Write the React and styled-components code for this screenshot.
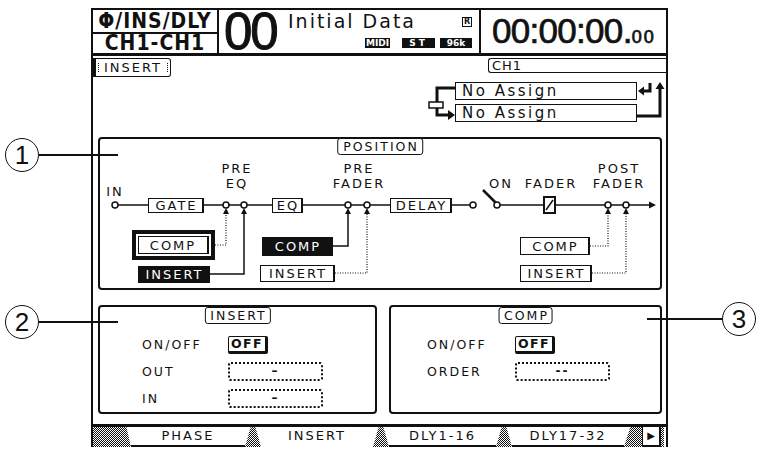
import React from 'react';
import styled, { createGlobalStyle, css } from 'styled-components';

// Shared values
const INK = '#111';
const LCD = `"DejaVu Sans", "Liberation Sans", sans-serif`;
const HATCH = `repeating-conic-gradient(${INK} 0 25%, #fff 0 50%) 0 0 / 2px 2px`;

const GlobalStyle = createGlobalStyle`
  html, body { margin: 0; padding: 0; background: #fff; }
  #root { width: 759px; height: 451px; }
`;

// Page & screen
const Page = styled.div`
  position: relative;
  width: 759px;
  height: 451px;
  overflow: hidden;
  box-sizing: border-box;
  padding: 8px 0 0 91px;
  font-family: ${LCD};
  color: ${INK};
`;

const Screen = styled.div`
  width: 577px;
  height: 439px;
  box-sizing: border-box;
  border: 2px solid ${INK};
  border-bottom: 0;
  display: flex;
  flex-direction: column;
`;

// Header
const Header = styled.header`
  display: flex;
  height: 46px;
  box-sizing: border-box;
  border-bottom: 3px solid ${INK};
`;

const ChannelCell = styled.div`
  width: 124px;
  border-right: 2px solid ${INK};
  display: flex;
  flex-direction: column;
`;

const ChannelRow = styled.div`
  height: ${p => p.$h}px;
  display: flex;
  align-items: center;
  justify-content: center;
  font-family: "DejaVu Sans Condensed", "Liberation Sans Narrow", "Liberation Sans", sans-serif;
  font-weight: bold;
  font-size: 21px;
  letter-spacing: 1px;
  line-height: 1;
  & + & { border-top: 2px solid ${INK}; }
`;

const SceneCell = styled.div`
  width: 260px;
  border-right: 2px solid ${INK};
  display: flex;
`;

const SceneNumber = styled.div`
  width: 66px;
  margin-top: -4px;
  padding-left: 5px;
  box-sizing: border-box;
  font-family: "Liberation Sans", sans-serif;
  font-size: 51px;
  line-height: 1;
  letter-spacing: -2px;
  -webkit-text-stroke: 1px ${INK};
`;

const SceneInfo = styled.div`
  flex: 1;
  display: flex;
  flex-direction: column;
  padding: 0 7px 0 3px;
`;

const SceneTitleRow = styled.div`
  display: flex;
  align-items: flex-start;
  justify-content: space-between;
  height: 28px;
`;

const SceneTitle = styled.span`
  font-family: "DejaVu Sans", sans-serif;
  font-size: 19px;
  letter-spacing: 2px;
  line-height: 23px;
`;

const ProtectMark = styled.span`
  margin-top: 7px;
  width: 10px;
  height: 10px;
  box-sizing: border-box;
  border: 1.5px solid ${INK};
  font-size: 8px;
  font-weight: bold;
  line-height: 7px;
  text-align: center;
`;

const BadgeRow = styled.div`
  display: flex;
  justify-content: flex-end;
`;

const Badge = styled.span`
  background: ${INK};
  color: #fff;
  height: 10px;
  width: ${p => p.$w}px;
  margin-left: ${p => p.$gap}px;
  font-size: 9px;
  font-weight: bold;
  line-height: 10px;
  text-align: center;
  letter-spacing: ${p => p.$ls || 0}px;
`;

const ClockCell = styled.div`
  flex: 1;
  display: flex;
  align-items: baseline;
  padding: 3px 0 0 11px;
  font-family: "Liberation Sans", sans-serif;
  -webkit-text-stroke: 0.7px ${INK};
`;

const ClockMain = styled.span`
  font-size: 35px;
  line-height: 1;
  letter-spacing: -0.7px;
`;

const ClockFrames = styled.span`
  font-size: 18px;
  letter-spacing: 2px;
`;

// Body
const Body = styled.main`
  flex: 1;
  display: flex;
  flex-direction: column;
`;

const TopArea = styled.div`
  height: 81px;
  display: flex;
  justify-content: space-between;
  padding-top: 2px;
  box-sizing: border-box;
`;

const PageLabel = styled.div`
  position: relative;
  height: 17px;
  padding: 0 8px;
  border: 1.5px solid ${INK};
  border-left-width: 3px;
  border-radius: 0 3px 3px 0;
  font-size: 13px;
  letter-spacing: 2px;
  line-height: 17px;
  &::before, &::after {
    content: '';
    position: absolute;
    top: 4px;
    height: 9px;
    border-left: 1.5px dotted ${INK};
  }
  &::before { left: 2px; }
  &::after { right: 2px; }
`;

const RoutingColumn = styled.div`
  display: flex;
  flex-direction: column;
  align-items: flex-end;
`;

const ChannelName = styled.div`
  width: 178px;
  height: 15px;
  box-sizing: border-box;
  border: 1.5px solid ${INK};
  border-right: 0;
  border-radius: 3px 0 0 3px;
  padding-left: 3px;
  font-size: 13px;
  letter-spacing: 1px;
  line-height: 13px;
`;

const AssignGrid = styled.div`
  margin-top: 9px;
  display: grid;
  grid-template-columns: 28px 182px 29px;
  grid-template-rows: 18px 18px;
  row-gap: 4px;
`;

const AssignBox = styled.div`
  grid-column: 2;
  border: 1.5px solid ${INK};
  box-sizing: border-box;
  padding-left: 6px;
  font-size: 15px;
  letter-spacing: 2.5px;
  line-height: 16px;
`;

const AssignIcon = styled.svg`
  grid-row: 1 / 3;
  grid-column: ${p => p.$col};
`;

// Position diagram
const PositionFrame = styled.section`
  position: relative;
  height: 153px;
  margin: 0 4px 0 5px;
  box-sizing: border-box;
  border: 2px solid ${INK};
  border-radius: 4px;
`;

const FrameLabel = styled.div`
  position: absolute;
  top: -1px;
  left: 50%;
  transform: translateX(-50%);
  height: 15px;
  padding: 0 3px 0 5px;
  border: 1.5px solid ${INK};
  border-radius: 3px;
  font-size: 12.5px;
  letter-spacing: 2px;
  line-height: 15px;
  background: #fff;
`;

const Canvas = styled.div`
  position: absolute;
  inset: -2px;
`;

const Wires = styled.svg`
  position: absolute;
  left: 0;
  top: 0;
`;

const DiagramText = styled.div`
  position: absolute;
  left: ${p => p.$x}px;
  top: ${p => p.$y}px;
  transform: translateX(-50%);
  font-size: 13px;
  line-height: 15px;
  letter-spacing: 2px;
  text-align: center;
  white-space: nowrap;
`;

const Block = styled.div`
  position: absolute;
  left: ${p => p.$x}px;
  top: ${p => p.$y}px;
  width: ${p => p.$w}px;
  height: ${p => p.$h}px;
  box-sizing: border-box;
  display: flex;
  align-items: center;
  justify-content: center;
  font-size: 13px;
  letter-spacing: 2px;
  padding-left: 2px;
  background: #fff;
  border: 1.5px solid ${INK};
  border-right-width: 2.5px;
  ${p => p.$variant === 'filled' && css`
    background: ${INK};
    color: #fff;
  `}
  ${p => p.$variant === 'selected' && css`
    border: 4px solid ${INK};
    padding: 2px;
  `}
`;

const BlockInner = styled.span`
  flex: 1;
  align-self: stretch;
  display: flex;
  align-items: center;
  justify-content: center;
  border: 1.5px solid ${INK};
  border-right-width: 2.5px;
`;

// Parameter panels
const PanelRow = styled.div`
  display: flex;
  gap: 12px;
  height: 109px;
  margin: 15px 4px 0 5px;
`;

const Panel = styled.section`
  position: relative;
  flex: 1;
  box-sizing: border-box;
  border: 2px solid ${INK};
  border-radius: 4px;
  padding: 24px 0 0 ${p => p.$pad}px;
  display: grid;
  grid-template-columns: ${p => p.$labelW}px auto;
  grid-auto-rows: 27px;
  align-content: start;
  align-items: center;
`;

const PanelLabel = styled.div`
  position: absolute;
  top: 0;
  left: 50%;
  transform: translateX(-50%);
  height: 15px;
  padding: 0 3px 0 5px;
  border: 1.5px solid ${INK};
  border-radius: 3px;
  font-size: 12.5px;
  letter-spacing: 2px;
  line-height: 15px;
`;

const ParamName = styled.span`
  font-size: 12.5px;
  letter-spacing: 2px;
`;

const OffButton = styled.span`
  justify-self: start;
  width: 40px;
  height: 18px;
  box-sizing: border-box;
  border: 1.5px solid ${INK};
  border-right-width: 3px;
  border-bottom-width: 3px;
  border-radius: 2px;
  font-size: 12.5px;
  font-weight: bold;
  letter-spacing: 1.5px;
  text-align: center;
  line-height: 14px;
`;

const ValueField = styled.span`
  justify-self: start;
  width: 95px;
  height: 19px;
  box-sizing: border-box;
  border: 2px dotted ${INK};
  border-radius: 3px;
  font-size: 12px;
  font-weight: bold;
  text-align: center;
  line-height: 15px;
  letter-spacing: 2px;
`;

// Tabs
const TabBar = styled.nav`
  margin-top: auto;
  height: 23px;
  box-sizing: border-box;
  border-top: 3px solid ${INK};
  display: flex;
`;

const Hatch = styled.div`
  width: ${p => p.$w}px;
  background: ${HATCH};
  clip-path: ${p => p.$clip || 'none'};
`;

const Tab = styled.div`
  width: ${p => p.$w}px;
  box-sizing: border-box;
  border-bottom: ${p => (p.$active ? '0' : `2px solid ${INK}`)};
  font-size: 13px;
  letter-spacing: 2px;
  line-height: 18px;
  text-align: center;
`;

const ArrowTab = styled.div`
  width: 19px;
  box-sizing: border-box;
  border: 1.5px solid ${INK};
  border-top: 0;
  border-right-width: 2.5px;
  border-bottom-width: 2.5px;
  font-size: 10px;
  line-height: 17px;
  text-align: center;
`;

// Callouts
const Callout = styled.div`
  position: absolute;
  left: ${p => p.$x}px;
  top: ${p => p.$y}px;
  display: flex;
  align-items: center;
`;

const CalloutNumber = styled.span`
  width: 34px;
  height: 34px;
  box-sizing: border-box;
  border: 1.5px solid ${INK};
  border-radius: 50%;
  display: flex;
  align-items: center;
  justify-content: center;
  font-family: "Liberation Sans", sans-serif;
  font-size: 26px;
  background: #fff;
`;

const CalloutLine = styled.span`
  width: ${p => p.$w}px;
  height: 0;
  border-top: 2px solid ${INK};
`;

// Diagram data (canvas coordinates)
const LINE_Y = 68;
const taps = [128, 146, 250, 269, 510, 528];

const blocks = [
  { label: 'GATE', x: 50, y: 61, w: 56 },
  { label: 'EQ', x: 174, y: 61, w: 31 },
  { label: 'DELAY', x: 292, y: 61, w: 62 },
];

const inserts = [
  { label: 'COMP', x: 34, y: 93, w: 83, h: 30, variant: 'selected', tap: 128, wy: 108, dotted: true },
  { label: 'INSERT', x: 40, y: 129, w: 72, h: 17, variant: 'filled', tap: 146, wy: 137, dotted: false },
  { label: 'COMP', x: 164, y: 100, w: 71, h: 19, variant: 'filled', tap: 250, wy: 109, dotted: false },
  { label: 'INSERT', x: 162, y: 128, w: 75, h: 17, variant: 'outline', tap: 269, wy: 136, dotted: true },
  { label: 'COMP', x: 422, y: 100, w: 70, h: 18, variant: 'outline', tap: 510, wy: 109, dotted: true },
  { label: 'INSERT', x: 422, y: 128, w: 72, h: 17, variant: 'outline', tap: 528, wy: 136, dotted: true },
];

const tabs = [
  { type: 'hatch', w: 38, clip: 'polygon(0 0, 88% 0, 100% 100%, 0 100%)' },
  { type: 'tab', label: 'PHASE', w: 114 },
  { type: 'hatch', w: 16, clip: 'polygon(35% 0, 65% 0, 100% 100%, 0 100%)' },
  { type: 'tab', label: 'INSERT', w: 112, active: true },
  { type: 'hatch', w: 16, clip: 'polygon(35% 0, 65% 0, 100% 100%, 0 100%)' },
  { type: 'tab', label: 'DLY1-16', w: 107 },
  { type: 'hatch', w: 16, clip: 'polygon(35% 0, 65% 0, 100% 100%, 0 100%)' },
  { type: 'tab', label: 'DLY17-32', w: 112 },
  { type: 'hatch', w: 18, clip: 'polygon(35% 0, 100% 0, 100% 100%, 0 100%)' },
  { type: 'arrow' },
  { type: 'hatch', w: 3 },
];

function Diagram() {
  return (
    <Canvas>
      <Wires width="568" height="157" viewBox="0 0 568 157">
        <g stroke={INK} strokeWidth="1.5" fill="none">
          <line x1="20" y1={LINE_Y} x2="125" y2={LINE_Y} />
          <line x1="131" y1={LINE_Y} x2="143" y2={LINE_Y} />
          <line x1="149" y1={LINE_Y} x2="247" y2={LINE_Y} />
          <line x1="253" y1={LINE_Y} x2="266" y2={LINE_Y} />
          <line x1="272" y1={LINE_Y} x2="372" y2={LINE_Y} />
          <line x1="402" y1={LINE_Y} x2="507" y2={LINE_Y} />
          <line x1="513" y1={LINE_Y} x2="525" y2={LINE_Y} />
          <line x1="531" y1={LINE_Y} x2="552" y2={LINE_Y} />
          <line x1="385" y1={LINE_Y - 15} x2="398" y2={LINE_Y - 2} strokeWidth="2.5" />
          {[17, 128, 146, 250, 269, 375, 399, 510, 528].map(cx => (
            <circle key={cx} cx={cx} cy={LINE_Y} r="3" fill="#fff" />
          ))}
          <rect x="446" y={LINE_Y - 8} width="11" height="16" fill="#fff" strokeWidth="2" />
          <line x1="448" y1={LINE_Y + 5} x2="455" y2={LINE_Y - 5} />
          {inserts.map(n => (
            <polyline
              key={n.tap + n.label}
              points={`${n.x + n.w},${n.wy} ${n.tap},${n.wy} ${n.tap},${LINE_Y + 9}`}
              strokeDasharray={n.dotted ? '1 1.5' : 'none'}
              strokeWidth={n.dotted ? 1.2 : 1.5}
            />
          ))}
        </g>
        <g fill={INK}>
          {taps.map(x => (
            <polygon key={x} points={`${x},${LINE_Y + 3} ${x - 3},${LINE_Y + 9} ${x + 3},${LINE_Y + 9}`} />
          ))}
          <polygon points={`558,${LINE_Y} 551,${LINE_Y - 3.5} 551,${LINE_Y + 3.5}`} />
        </g>
      </Wires>

      <DiagramText $x={17} $y={47}>IN</DiagramText>
      <DiagramText $x={139} $y={24}>PRE<br />EQ</DiagramText>
      <DiagramText $x={261} $y={24}>PRE<br />FADER</DiagramText>
      <DiagramText $x={403} $y={39}>ON</DiagramText>
      <DiagramText $x={453} $y={39}>FADER</DiagramText>
      <DiagramText $x={521} $y={24}>POST<br />FADER</DiagramText>

      {blocks.map(b => (
        <Block key={b.label} $x={b.x} $y={b.y} $w={b.w} $h={15}>{b.label}</Block>
      ))}
      {inserts.map(n => (
        <Block key={n.tap + n.label} $x={n.x} $y={n.y} $w={n.w} $h={n.h} $variant={n.variant}>
          {n.variant === 'selected' ? <BlockInner>{n.label}</BlockInner> : n.label}
        </Block>
      ))}
    </Canvas>
  );
}

export default function App() {
  return (
    <Page>
      <GlobalStyle />
      <Screen>
        <Header>
          <ChannelCell>
            <ChannelRow $h={22}>Φ/INS/DLY</ChannelRow>
            <ChannelRow $h={19}>CH1-CH1</ChannelRow>
          </ChannelCell>
          <SceneCell>
            <SceneNumber>00</SceneNumber>
            <SceneInfo>
              <SceneTitleRow>
                <SceneTitle>Initial Data</SceneTitle>
                <ProtectMark>R</ProtectMark>
              </SceneTitleRow>
              <BadgeRow>
                <Badge $w={25} $gap={0}>MIDI</Badge>
                <Badge $w={33} $gap={12} $ls={3}>ST</Badge>
                <Badge $w={32} $gap={5}>96k</Badge>
              </BadgeRow>
            </SceneInfo>
          </SceneCell>
          <ClockCell>
            <ClockMain>00:00:00.</ClockMain>
            <ClockFrames>00</ClockFrames>
          </ClockCell>
        </Header>

        <Body>
          <TopArea>
            <PageLabel>INSERT</PageLabel>
            <RoutingColumn>
              <ChannelName>CH1</ChannelName>
              <AssignGrid>
                <AssignIcon $col={1} width="28" height="40" viewBox="0 0 28 40">
                  <g stroke={INK} strokeWidth="3" fill="none">
                    <polyline points="28,6 10,6 10,20" />
                    <polyline points="10,26 10,33 22,33" />
                  </g>
                  <rect x="2" y="20" width="14" height="6" fill="#fff" stroke={INK} strokeWidth="1.5" />
                  <polygon points="21,28 28,33 21,38" fill={INK} />
                </AssignIcon>
                <AssignBox>No Assign</AssignBox>
                <AssignBox>No Assign</AssignBox>
                <AssignIcon $col={3} width="29" height="40" viewBox="0 0 29 40">
                  <g stroke={INK} strokeWidth="3" fill="none">
                    <polyline points="13,1 13,9 6,9" />
                    <polyline points="0,34 23,34 23,6" />
                  </g>
                  <polygon points="1,9 7,4.5 7,13.5" fill={INK} />
                  <polygon points="23,0 18.5,7 27.5,7" fill={INK} />
                </AssignIcon>
              </AssignGrid>
            </RoutingColumn>
          </TopArea>

          <PositionFrame>
            <FrameLabel>POSITION</FrameLabel>
            <Diagram />
          </PositionFrame>

          <PanelRow>
            <Panel $pad={42} $labelW={86}>
              <PanelLabel>INSERT</PanelLabel>
              <ParamName>ON/OFF</ParamName>
              <OffButton>OFF</OffButton>
              <ParamName>OUT</ParamName>
              <ValueField>–</ValueField>
              <ParamName>IN</ParamName>
              <ValueField>–</ValueField>
            </Panel>
            <Panel $pad={36} $labelW={88}>
              <PanelLabel>COMP</PanelLabel>
              <ParamName>ON/OFF</ParamName>
              <OffButton>OFF</OffButton>
              <ParamName>ORDER</ParamName>
              <ValueField>--</ValueField>
            </Panel>
          </PanelRow>

          <TabBar>
            {tabs.map((t, i) => {
              if (t.type === 'hatch') return <Hatch key={i} $w={t.w} $clip={t.clip} />;
              if (t.type === 'arrow') return <ArrowTab key={i}>▶</ArrowTab>;
              return <Tab key={i} $w={t.w} $active={t.active}>{t.label}</Tab>;
            })}
          </TabBar>
        </Body>
      </Screen>

      <Callout $x={5} $y={138}>
        <CalloutNumber>1</CalloutNumber>
        <CalloutLine $w={79} />
      </Callout>
      <Callout $x={5} $y={305}>
        <CalloutNumber>2</CalloutNumber>
        <CalloutLine $w={79} />
      </Callout>
      <Callout $x={647} $y={302}>
        <CalloutLine $w={75} />
        <CalloutNumber>3</CalloutNumber>
      </Callout>
    </Page>
  );
}
